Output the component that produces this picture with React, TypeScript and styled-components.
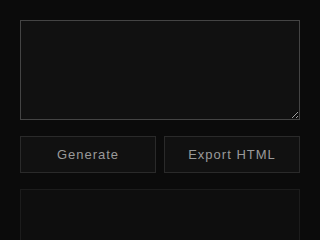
import React, { useEffect, useRef } from "react";
import styled, { createGlobalStyle } from "styled-components";

const Global = createGlobalStyle`
  html, body { margin: 0; padding: 0; background: #0b0b0b; }
  body { font-family: "Liberation Sans", Arial, sans-serif; }
  * { box-sizing: border-box; }
`;

const Page = styled.div`
  display: flex;
  flex-direction: column;
  gap: 16px;
  padding: 20px;
  background: #0b0b0b;
  min-height: 240px;
`;

const Editor = styled.textarea`
  display: block;
  width: 100%;
  height: 100px;
  padding: 16px;
  background: #111111;
  border: 1px solid #444444;
  border-radius: 0;
  color: #dddddd;
  caret-color: #e6e6e6;
  font-family: "Liberation Mono", monospace;
  font-size: 14px;
  line-height: 20px;
  outline: none;
  resize: vertical;
  margin: 0;
`;

const Actions = styled.div`
  display: grid;
  grid-template-columns: 1fr 1fr;
  gap: 8px;
`;

const Button = styled.button`
  height: 37px;
  background: #111111;
  border: 1px solid #2a2a2a;
  color: #9a9a9a;
  font-family: "Liberation Sans", Arial, sans-serif;
  font-size: 13px;
  letter-spacing: 1px;
  cursor: pointer;
  padding: 0;
`;

const Output = styled.div`
  height: 120px;
  background: #0e0e0e;
  border: 1px solid #1c1c1c;
`;

export default function App() {
  const ref = useRef<HTMLTextAreaElement>(null);
  useEffect(() => {
    ref.current?.focus();
  }, []);
  return (
    <>
      <Global />
      <Page>
        <Editor ref={ref} autoFocus spellCheck={false} />
        <Actions>
          <Button>Generate</Button>
          <Button>Export HTML</Button>
        </Actions>
        <Output />
      </Page>
    </>
  );
}
